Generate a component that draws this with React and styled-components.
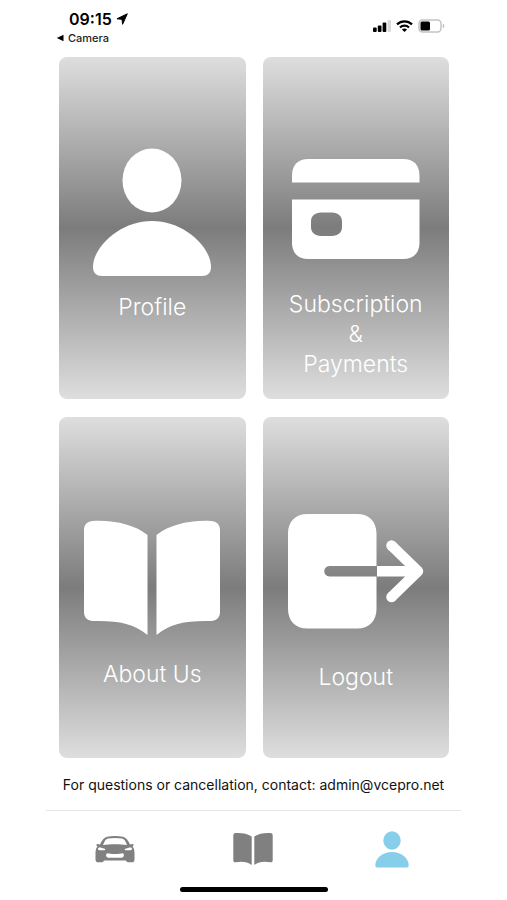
import React from "react";
import styled, { createGlobalStyle } from "styled-components";

const GlobalStyle = createGlobalStyle`
  *, *::before, *::after { box-sizing: border-box; }
  body {
    margin: 0;
    background: #fff;
    color: #111;
    font-family: Inter, "Liberation Sans", sans-serif;
  }
`;

const Screen = styled.div`
  min-height: 100vh;
  padding: 0 46px;
  display: flex;
  flex-direction: column;
`;

const StatusBar = styled.header`
  height: 57px;
  padding: 9px 16px 0 10px;
  display: flex;
  justify-content: space-between;
  align-items: flex-start;
`;

const Clock = styled.div`
  display: flex;
  align-items: center;
  gap: 4px;
  padding-left: 13px;
  font-size: 16px;
  line-height: 20px;
  font-weight: 600;
  color: #000;
`;

const BackLink = styled.a`
  display: flex;
  align-items: center;
  gap: 4px;
  font-size: 11px;
  line-height: 18px;
  font-weight: 500;
  color: #222;
  text-decoration: none;
`;

const Indicators = styled.div`
  display: flex;
  align-items: center;
  gap: 5px;
  padding-top: 10px;
`;

const Grid = styled.main`
  flex: 1;
  display: grid;
  grid-template-columns: 1fr 1fr;
  grid-auto-rows: minmax(341px, 1fr);
  gap: 18px 17px;
  padding: 0 12px 0 13px;
`;

const Card = styled.button`
  display: flex;
  flex-direction: column;
  align-items: center;
  justify-content: flex-start;
  padding: 80px 8px 16px;
  border: 0;
  border-radius: 8px;
  background: linear-gradient(#dedede, #7c7c7c 50%, #dedede);
  color: #fff;
  font: inherit;
  cursor: pointer;
`;

const CardLabel = styled.span`
  padding-top: 1px;
  font-size: 23px;
  line-height: 30px;
  font-weight: 300;
  text-align: center;
  white-space: pre-line;
`;

const Contact = styled.p`
  margin: 0;
  padding: 17px 0 15px;
  font-size: 14px;
  line-height: 20px;
  text-align: center;
`;

const TabBar = styled.nav`
  display: grid;
  grid-template-columns: repeat(3, 1fr);
  height: 77px;
  border-top: 1px solid #e6e6e6;
`;

const Tab = styled.button`
  display: flex;
  align-items: center;
  justify-content: center;
  padding: 0;
  border: 0;
  background: none;
  color: ${(p) => (p.$active ? "#87ceeb" : "#808080")};
  cursor: pointer;
`;

const HomeIndicator = styled.div`
  align-self: center;
  width: 148px;
  height: 5px;
  margin-bottom: 8px;
  border-radius: 3px;
  background: #000;
`;

const LocationIcon = () => (
  <svg width="12" height="12" viewBox="0 0 12 12" aria-hidden="true">
    <path d="M11.3.8 6.600 11.300 6 6.300 1 5.800z" fill="#000" stroke="#000" strokeLinejoin="round" />
  </svg>
);

const BackIcon = () => (
  <svg width="8" height="8" viewBox="0 0 8 8" aria-hidden="true">
    <path d="M7.5 0.8v6.4L0.8 4z" fill="#000" />
  </svg>
);

const SignalIcon = () => (
  <svg width="18" height="12" viewBox="0 0 18 12" aria-hidden="true">
    <rect x="0" y="7.500" width="3.700" height="4.500" rx="1" />
    <rect x="4.800" y="5.500" width="3.700" height="6.500" rx="1" />
    <rect x="9.600" y="2.500" width="3.700" height="9.500" rx="1" />
    <rect x="14.500" y="0" width="3.500" height="12" rx="1" fill="#d9d9d9" />
  </svg>
);

const WifiIcon = () => (
  <svg width="17" height="12" viewBox="0 0 17 12" fill="none" stroke="#000" strokeWidth="2.2" aria-hidden="true">
    <path d="M1 4.4C5.2.3 11.8.3 16 4.4" />
    <path d="M4 7.5c2.5-2.4 6.500-2.400 9 0" />
    <path d="M8.500 12 5.900 9.500c1.500-1.300 3.700-1.300 5.200 0z" fill="#000" stroke="none" />
  </svg>
);

const BatteryIcon = () => (
  <svg width="27" height="14" viewBox="0 0 27 14" aria-hidden="true">
    <rect x="1" y="1" width="22" height="12" rx="3.500" fill="none" stroke="#c4c4c4" strokeWidth="1.500" />
    <rect x="2.500" y="2.500" width="9.500" height="9" rx="1.500" />
    <path d="M24.800 4.800c2 .6 2 3.800 0 4.400z" fill="#bbb" />
  </svg>
);

const ProfileArt = () => (
  <svg width="160" height="154" viewBox="0 0 160 154" fill="#fff" aria-hidden="true">
    <ellipse cx="80" cy="43.500" rx="29.500" ry="32" />
    <path d="M80 84C112 84 139 110 139 130C139 136 135.500 139 130 139H30C24.500 139 21 136 21 130C21 110 48 84 80 84Z" />
  </svg>
);

const CreditCardArt = () => (
  <svg width="160" height="151" viewBox="0 0 160 151" fill="#fff" aria-hidden="true">
    <path d="M16 45.500V38.500C16 28 22 22 32.500 22H127C137.500 22 143.500 28 143.500 38.500V45.500Z" />
    <path
      fillRule="evenodd"
      d="M16 62.500H143.500V105.500C143.500 116 137.500 122 127 122H32.500C22 122 16 116 16 105.500ZM45 75.500C39 75.500 35 79 35 84.500V90C35 95.500 39 99 45 99H56C62 99 66 95.500 66 90V84.500C66 79 62 75.500 56 75.500Z"
    />
  </svg>
);

const BookArt = () => (
  <svg width="160" height="161" viewBox="0 0 160 161" fill="#fff" aria-hidden="true">
    <path d="M21 24C43 23 63 28 75.500 38V138C61 126 46 123.500 21 124C15.500 124 12 120.500 12 115V33C12 27.500 15.500 24 21 24Z" />
    <path d="M139 24C117 23 97 28 84.500 38V138C99 126 114 123.500 139 124C144.500 124 148 120.500 148 115V33C148 27.500 144.500 24 139 24Z" />
  </svg>
);

const LogoutArt = () => (
  <svg width="160" height="164" viewBox="0 0 160 164" fill="#fff" aria-hidden="true">
    <path d="M100.500 69H53.500C46.500 69 46.500 79.500 53.500 79.500H100.500V112C100.500 124 93 131.500 81 131.500H31.500C19.500 131.500 12 124 12 112V36.500C12 24.500 19.500 17 31.500 17H81C93 17 100.500 24.500 100.500 36.500Z" />
    <path
      d="M101 74.300H141M115.500 48.500 142 74.300 115.500 100"
      fill="none"
      stroke="#fff"
      strokeWidth="10.500"
      strokeLinejoin="round"
    />
    <circle cx="115.500" cy="48.500" r="5.250" />
    <circle cx="115.500" cy="100" r="5.250" />
  </svg>
);

const CarIcon = () => (
  <svg width="40" height="28" viewBox="0 0 40 28" fill="currentColor" aria-hidden="true">
    <path
      fillRule="evenodd"
      d="M5 9.500C7 5 9 2.500 12 1.700C17 .7 23 .7 28 1.700C31 2.500 33 5 35 9.500L37.500 9C39 9 39 10.500 37.500 11.500C39.300 13.500 39.500 16 39.500 19V24.500C39.500 26.500 38.500 27.300 36.500 27.300H34C32 27.300 31.500 26.500 31 25.500H9C8.500 26.500 8 27.300 6 27.300H3.500C1.500 27.300 .5 26.500 .5 24.500V19C.5 16 .7 13.500 2.500 11.500C1 10.500 1 9 2.500 9ZM8 10C15 9 25 9 32 10C30.500 6.500 29.500 4.200 27 3.600C22.500 2.900 17.500 2.900 13 3.600C10.500 4.200 9.500 6.500 8 10ZM3.500 12.800C2.500 14 3 15.300 4.500 15.300H9.500C11 15 10.500 14 9 13.600C7 13.200 5.500 12.200 3.500 12.800ZM36.500 12.800C37.500 14 37 15.300 35.500 15.300H30.500C29 15 29.500 14 31 13.600C33 13.200 34.500 12.200 36.500 12.800ZM12.500 18.300C10.500 18.300 10.500 22.700 13.500 22.700H26.500C29.500 22.700 29.500 18.300 27.500 18.300C25 19.300 15 19.300 12.500 18.300Z"
    />
  </svg>
);

const BookIcon = () => (
  <svg width="40" height="34" viewBox="0 0 40 34" fill="currentColor" aria-hidden="true">
    <path d="M2.500 1C9 .7 14.500 1.500 18.700 4.500V33C14 29.500 9 29 2.500 30.300C1 30.500 .3 29.500 .3 28V3.500C.3 2 1 1 2.500 1Z" />
    <path d="M37.500 1C31 .7 25.500 1.500 21.300 4.500V33C26 29.500 31 29 37.500 30.300C39 30.500 39.700 29.500 39.700 28V3.500C39.700 2 39 1 37.500 1Z" />
  </svg>
);

const PersonIcon = () => (
  <svg width="34" height="37" viewBox="0 0 34 37" fill="currentColor" aria-hidden="true">
    <ellipse cx="17" cy="9.500" rx="8.700" ry="9.300" />
    <path d="M17 21C27 21 33.700 28 33.700 34C33.700 35.800 33 36.500 31.500 36.500H2.500C1 36.500 .3 35.800 .3 34C.3 28 7 21 17 21Z" />
  </svg>
);

const cards = [
  { label: "Profile", Art: ProfileArt },
  { label: "Subscription\n&\nPayments", Art: CreditCardArt },
  { label: "About Us", Art: BookArt },
  { label: "Logout", Art: LogoutArt },
];

const tabs = [
  { label: "Vehicle", Icon: CarIcon },
  { label: "Guide", Icon: BookIcon },
  { label: "Account", Icon: PersonIcon, active: true },
];

export default function App() {
  return (
    <>
      <GlobalStyle />
      <Screen>
        <StatusBar>
          <div>
            <Clock>
              09:15
              <LocationIcon />
            </Clock>
            <BackLink href="#camera">
              <BackIcon />
              Camera
            </BackLink>
          </div>
          <Indicators>
            <SignalIcon />
            <WifiIcon />
            <BatteryIcon />
          </Indicators>
        </StatusBar>
        <Grid>
          {cards.map(({ label, Art }) => (
            <Card key={label} type="button">
              <Art />
              <CardLabel>{label}</CardLabel>
            </Card>
          ))}
        </Grid>
        <Contact>For questions or cancellation, contact: admin@vcepro.net</Contact>
        <TabBar>
          {tabs.map(({ label, Icon, active }) => (
            <Tab key={label} type="button" aria-label={label} $active={active}>
              <Icon />
            </Tab>
          ))}
        </TabBar>
        <HomeIndicator />
      </Screen>
    </>
  );
}
